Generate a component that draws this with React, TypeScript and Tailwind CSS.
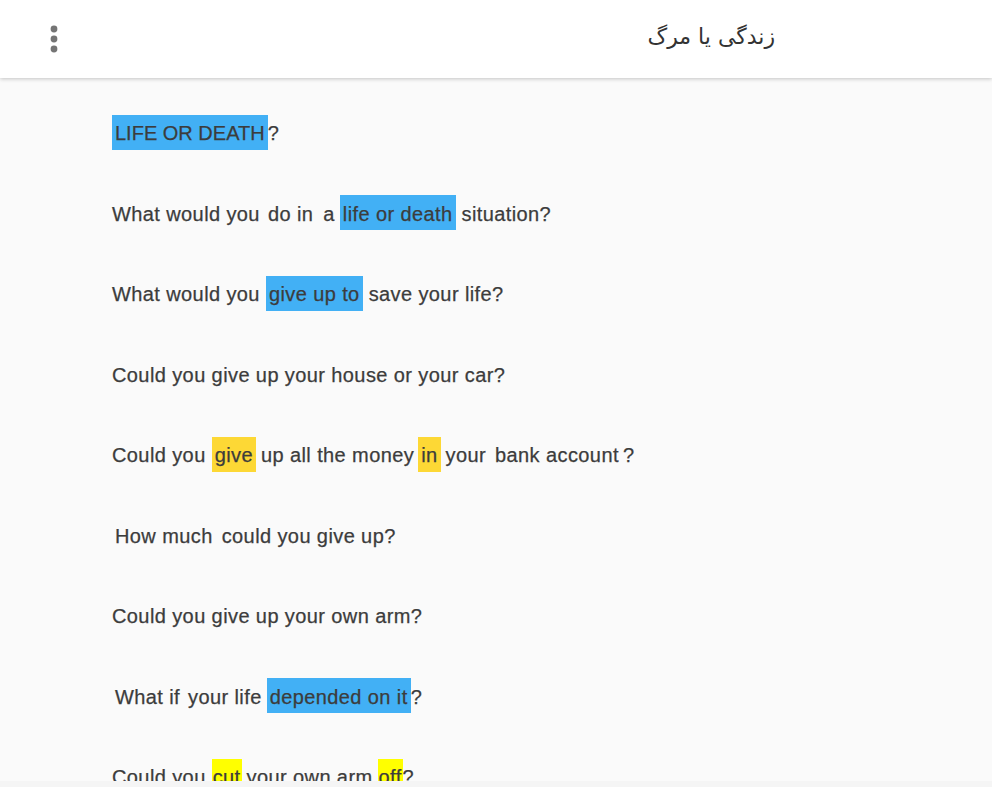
import React from "react";

type Seg = { t: string; hl?: "blue" | "yellow" | "bright"; ml?: number };

const hlClass: Record<string, string> = {
  blue: "bg-[#42b0f5] px-[3px]",
  yellow: "bg-[#fdd835] px-[3px]",
  bright: "bg-[#ffff00] px-[1px]",
};

const lines: { indent?: boolean; caps?: boolean; segs: Seg[] }[] = [
  { caps: true, segs: [{ t: "LIFE OR DEATH", hl: "blue" }, { t: "?" }] },
  {
    segs: [
      { t: "What would you" },
      { t: "do in", ml: 8 },
      { t: "a", ml: 10 },
      { t: "life or death", hl: "blue", ml: 5 },
      { t: "situation?", ml: 6 },
    ],
  },
  {
    segs: [
      { t: "What would you" },
      { t: "give up to", hl: "blue", ml: 6 },
      { t: "save your life?", ml: 6 },
    ],
  },
  { segs: [{ t: "Could you give up your house or your car?" }] },
  {
    segs: [
      { t: "Could you" },
      { t: "give", hl: "yellow", ml: 6 },
      { t: "up all the money", ml: 5 },
      { t: "in", hl: "yellow", ml: 4 },
      { t: "your", ml: 5 },
      { t: "bank", ml: 9 },
      { t: "account", ml: 6 },
      { t: "?", ml: 4 },
    ],
  },
  {
    indent: true,
    segs: [{ t: "How much" }, { t: "could you give up?", ml: 9 }],
  },
  { segs: [{ t: "Could you give up your own arm?" }] },
  {
    indent: true,
    segs: [
      { t: "What if" },
      { t: "your life", ml: 8 },
      { t: "depended on it", hl: "blue", ml: 5 },
      { t: "?" },
    ],
  },
  {
    segs: [
      { t: "Could you" },
      { t: "cut", hl: "bright", ml: 6 },
      { t: "your own arm", ml: 5 },
      { t: "off", hl: "bright", ml: 5 },
      { t: "?" },
    ],
  },
];

export default function App() {
  return (
    <div
      className="h-[787px] w-full bg-[#f5f5f5] flex flex-col overflow-hidden"
      style={{ fontFamily: '"Liberation Sans", Arial, sans-serif' }}
    >
      <header className="h-[78px] shrink-0 bg-white flex items-center shadow-[0_1px_4px_rgba(0,0,0,0.22)] relative z-10">
        <div className="w-[108px] flex items-center justify-center">
          <svg width="8" height="28" viewBox="0 0 8 28">
            <circle cx="4" cy="4" r="3.4" fill="#757575" />
            <circle cx="4" cy="14" r="3.4" fill="#757575" />
            <circle cx="4" cy="24" r="3.4" fill="#757575" />
          </svg>
        </div>
        <div className="flex-1 flex justify-end pr-[217px]">
          <span
            dir="rtl"
            className="text-[22px] text-[#333] leading-none mt-[-4px]"
            style={{ fontFamily: '"DejaVu Sans", "Noto Sans", sans-serif' }}
          >
            زندگی یا مرگ
          </span>
        </div>
      </header>
      <main className="h-[703px] shrink-0 bg-[#fafafa] overflow-hidden pl-[112px] pt-[14px]">
        {lines.map((ln, i) => (
          <div
            key={i}
            className={`h-[80.5px] flex items-center text-[20px] text-[#3c3c3c] whitespace-pre [-webkit-text-stroke:0.25px_#3c3c3c] ${
              ln.indent ? "pl-[3px]" : ""
            } ${ln.caps ? "tracking-normal" : "tracking-[0.4px]"}`}
          >
            {ln.segs.map((s, j) => (
              <span
                key={j}
                className={`inline-flex items-center h-[35px] pt-[2px] ${s.hl ? hlClass[s.hl] : ""}`}
                style={s.ml ? { marginLeft: s.ml } : undefined}
              >
                {s.t}
              </span>
            ))}
          </div>
        ))}
      </main>
    </div>
  );
}
